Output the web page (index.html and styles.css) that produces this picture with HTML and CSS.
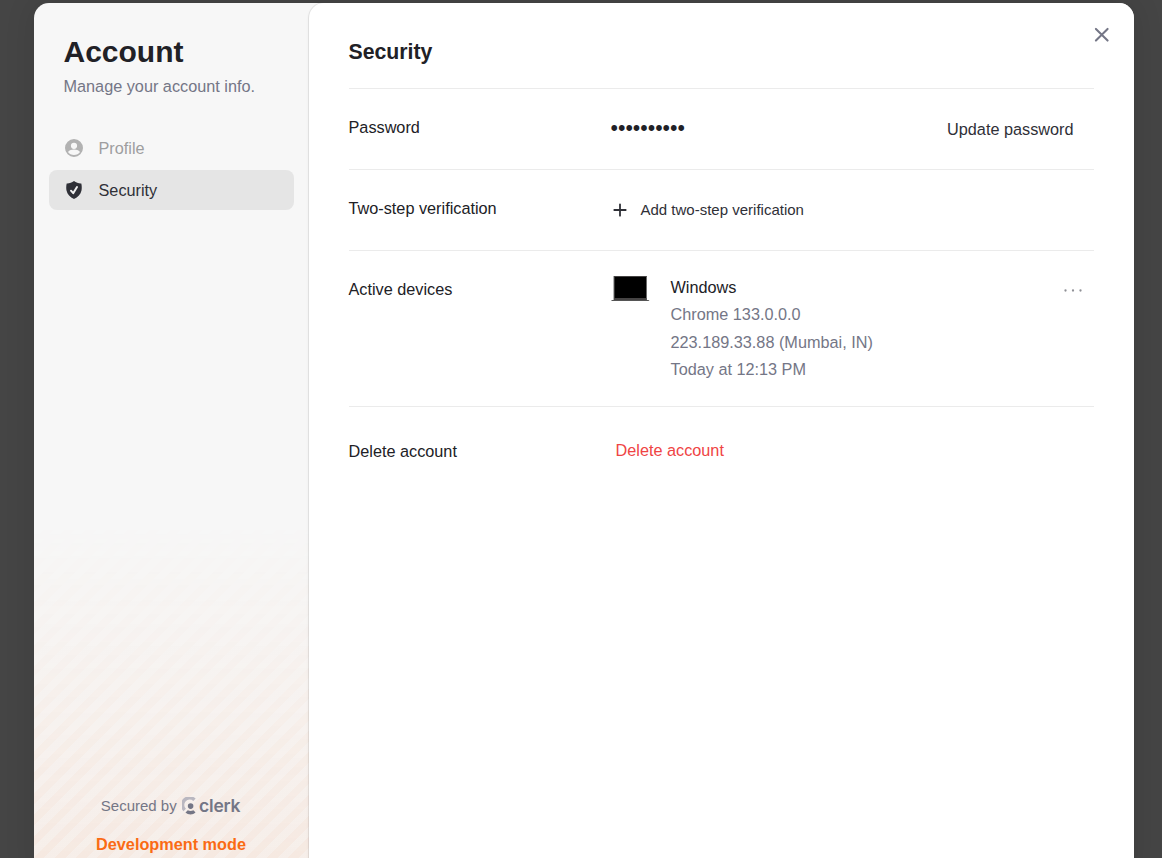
FILE: index.html
```html
<!DOCTYPE html>
<html lang="en">
<head>
<meta charset="utf-8">
<title>Account</title>
<link rel="stylesheet" href="styles.css">
</head>
<body>
<div class="modal">
  <aside class="sidebar">
    <h1 class="title">Account</h1>
    <p class="subtitle">Manage your account info.</p>
    <nav class="nav">
      <a class="nav-item">
        <svg class="nav-icon" viewBox="0 0 20 20"><path fill="currentColor" fill-rule="evenodd" d="M10 1a9 9 0 1 0 0 18 9 9 0 0 0 0-18Zm0 3.700a3.100 3.100 0 1 1 0 6.200 3.100 3.100 0 0 1 0-6.200ZM4 14.100c1.400-1.800 3.600-2.500 6-2.500s4.600.7 6 2.500c-1.100 1.900-3.500 3-6 3s-4.900-1.100-6-3Z"/></svg>
        <span>Profile</span>
      </a>
      <a class="nav-item active">
        <svg class="nav-icon" viewBox="0 0 20 20"><path fill="currentColor" d="M10 1.100c-2.100 1.700-4.700 2.400-7.300 2.300-.6 2.100-.6 5.200-.2 7.200.8 3.800 3.600 6.800 7.500 8.400 3.900-1.600 6.700-4.600 7.500-8.400.4-2 .4-5.100-.2-7.200-2.600.1-5.200-.6-7.300-2.300Z"/><path d="m7 10.700 2.200 2.500 3.800-6.200" fill="none" stroke="#f0f0f0" stroke-width="2" stroke-linecap="round" stroke-linejoin="round"/></svg>
        <span>Security</span>
      </a>
    </nav>
    <footer class="footer">
      <div class="secured">
        <span>Secured by</span>
        <span class="clerk">
          <svg class="clerk-mark" viewBox="0 0 14 18">
            <path d="M12.500 2.800A7 7 0 0 0 2.700 13" fill="none" stroke="#b9b7c0" stroke-width="3.400"/>
            <circle cx="8.600" cy="9.100" r="2.800" fill="#747686"/>
            <path d="M3.500 15.500 5.800 13.200q2.800 1.400 5.600 0l2.100 2.300c-2.500 2.500-7.500 2.500-10 0Z" fill="#747686"/>
          </svg>
          <span class="clerk-word">clerk</span>
        </span>
      </div>
      <div class="mode">Development mode</div>
    </footer>
  </aside>
  <main class="panel">
    <svg class="close" viewBox="0 0 16 16"><path d="m2 2 12 12M14 2 2 14" fill="none" stroke="currentColor" stroke-width="2.100" stroke-linecap="round"/></svg>
    <h2 class="heading">Security</h2>
    <section class="row">
      <div class="label">Password</div>
      <div class="bullets">••••••••••</div>
      <a class="update">Update password</a>
    </section>
    <section class="row">
      <div class="label">Two-step verification</div>
      <a class="add"><svg class="plus" viewBox="0 0 14 14"><path d="M7 1.300v11.400M1.300 7h11.400" fill="none" stroke="currentColor" stroke-width="1.800" stroke-linecap="round"/></svg><span>Add two-step verification</span></a>
    </section>
    <section class="row devices">
      <div class="label">Active devices</div>
      <div class="device">
        <svg class="laptop" viewBox="0 0 40 26"><path d="M2.500 0h33.500v25H2.500Z" fill="#6a6a6a"/><path d="M3 0h32.500v1H3ZM3 22h32.500v2H3Z" fill="#454343"/><path d="M3.500 1h31.500v21H3.500Z" fill="#000"/><path d="M0 24h38.500l-1 1H1Z" fill="#555"/></svg>
        <div class="info">
          <div class="device-name">Windows</div>
          <div>Chrome 133.0.0.0</div>
          <div>223.189.33.88 (Mumbai, IN)</div>
          <div>Today at 12:13 PM</div>
        </div>
      </div>
      <svg class="more" viewBox="0 0 20 4"><g fill="#8f9096"><circle cx="2.500" cy="1.500" r="1.150"/><circle cx="10" cy="1.500" r="1.150"/><circle cx="17.500" cy="1.500" r="1.150"/></g></svg>
    </section>
    <section class="row delete-row">
      <div class="label">Delete account</div>
      <a class="delete">Delete account</a>
    </section>
  </main>
</div>
</body>
</html>
```
FILE: styles.css
```css
* { box-sizing: border-box; }
body {
  margin: 0;
  height: 858px;
  overflow: hidden;
  padding: 3px 28px 0 34px;
  background: #454545;
  font: 16.25px/22px "Liberation Sans", Arial, sans-serif;
  color: #212126;
}
h1, h2, p { margin: 0; }
svg { display: block; flex: none; }
.modal {
  display: flex;
  height: 880px;
  border-radius: 15px;
  overflow: hidden;
  background: #f7f7f7;
  box-shadow: 0 0 30px rgba(0, 0, 0, .12);
}
.sidebar {
  position: relative;
  display: flex;
  flex-direction: column;
  width: 275px;
  height: 855px;
  padding: 30px 15px 0;
}
.sidebar::before {
  content: "";
  position: absolute;
  inset: 520px 0 0;
  background: repeating-linear-gradient(-45deg, rgba(243, 107, 22, .06) 0 7.5px, rgba(243, 107, 22, .095) 7.5px 15px);
  mask-image: linear-gradient(transparent, #000);
}
.title { padding-left: 14.5px; font-size: 30px; line-height: 38px; }
.subtitle { padding-left: 14.5px; margin-top: 4px; color: #747686; }
.nav { display: flex; flex-direction: column; gap: 2px; margin-top: 31px; }
.nav-item {
  display: flex;
  align-items: center;
  gap: 14.5px;
  height: 40px;
  padding-left: 15px;
  border-radius: 8px;
  color: #9e9e9f;
}
.nav-icon { width: 20px; height: 20px; color: #b2b2b2; }
.nav-item.active { background: #e5e5e5; color: #2f3037; }
.active .nav-icon { color: #2f3037; }
.footer { margin-top: auto; height: 62px; padding-right: 1px; text-align: center; position: relative; }
.secured {
  display: flex;
  justify-content: center;
  gap: 5.5px;
  font-size: 15px;
  line-height: 20px;
  color: #747686;
}
.clerk { display: flex; align-items: center; gap: 2px; }
.clerk-mark { width: 14px; height: 18px; }
.clerk-word { width: 43px; font: 600 17.5px/20px Inter, sans-serif; letter-spacing: -.2px; }
.mode { margin-top: 17px; font-weight: 700; color: #fa6b14; }
.panel {
  position: relative;
  flex: 1;
  padding: 36px 40px 0 39.5px;
  border-radius: 15px 0 0 15px;
  background: #fff;
  box-shadow: 0 0 0 1px rgba(0, 0, 0, .06), 0 1px 3px rgba(0, 0, 0, .1);
}
.heading { height: 49px; font-size: 21.25px; line-height: 26px; }
.close { position: absolute; right: 25px; top: 24.4px; width: 15.5px; height: 15.5px; color: #747686; }
.row {
  display: grid;
  grid-template-columns: 262px 1fr auto;
  align-items: start;
  height: 81px;
  padding-top: 27px;
  border-top: 1px solid #ebebeb;
}
.bullets { padding-top: 1px; font-size: 21.25px; }
.update { margin-top: 2px; padding-right: 20.5px; color: #2f3037; }
.add { display: flex; align-items: center; gap: 13.5px; margin-top: 2px; padding-left: 2.5px; font-size: 15px; color: #2f3037; }
.plus { width: 14px; height: 14px; }
.devices { height: 156px; padding-top: 25px; }
.devices .label { padding-top: 2px; }
.device { display: flex; gap: 20px; }
.laptop { width: 40px; height: 26px; }
.info { line-height: 27.4px; color: #747686; margin-top: -2px; }
.device-name { color: #212126; }
.more { width: 20px; height: 4px; margin: 13px 11px 0 0; }
.delete-row { padding-top: 33px; }
.delete { margin-top: -1px; padding-left: 5px; color: #ef4444; }
```
